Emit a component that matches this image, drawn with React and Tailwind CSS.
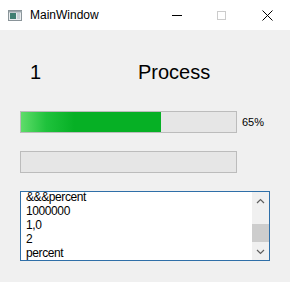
const lines = ["&&&percent", "1000000", "1,0", "2", "percent"];

function AppIcon() {
	return (
		<svg width="14" height="11" viewBox="0 0 14 11">
			<rect x="0.5" y="0.5" width="13" height="10" fill="#e8ecee" stroke="#8a9499" />
			<rect x="1" y="1" width="13" height="1.5" fill="#9aa6ab" />
			<rect x="2" y="3" width="6" height="6" fill="#3f7f72" />
			<rect x="9" y="3" width="3" height="6" fill="#c9d2d6" />
		</svg>
	);
}

function ProgressBar({ value }) {
	return (
		<div className="h-[22px] w-[217px] border border-[#bcbcbc] bg-[#e6e6e6]">
			{value > 0 ? (
				<div
					className="h-full bg-[linear-gradient(90deg,#5fdc6a_0%,#1fc23c_18%,#06b025_38%,#06b025_100%)]"
					style={{ width: `${value}%` }}
				/>
			) : null}
		</div>
	);
}

function ListBox() {
	return (
		<div className="flex h-[70px] w-[261px] border border-[#2f6fa8] bg-white">
			<div className="flex-1 overflow-hidden pl-[5px]">
				<div className="-mt-[2px] text-[12px] leading-[14px] tracking-[-0.4px] text-black">
					{lines.map((line) => (
						<div key={line}>{line}</div>
					))}
				</div>
			</div>
			<div className="flex w-[17px] flex-col bg-[#f0f0f0]">
				<div className="flex h-[17px] items-center justify-center">
					<svg width="9" height="6" viewBox="0 0 9 6">
						<path d="M1 5 L4.5 1.5 L8 5" fill="none" stroke="#606060" strokeWidth="1.2" />
					</svg>
				</div>
				<div className="flex-1" />
				<div className="h-[18px] bg-[#cdcdcd]" />
				<div className="h-[1px]" />
				<div className="flex h-[17px] items-center justify-center">
					<svg width="9" height="6" viewBox="0 0 9 6">
						<path d="M1 1 L4.5 4.5 L8 1" fill="none" stroke="#606060" strokeWidth="1.2" />
					</svg>
				</div>
			</div>
		</div>
	);
}

export default function App() {
	return (
		<div className="flex h-[282px] w-[290px] flex-col bg-[#f0f0f0] font-['Liberation_Sans',Arial,sans-serif]">
			<div className="flex h-[30px] items-center bg-white">
				<div className="ml-[8px] flex">
					<AppIcon />
				</div>
				<span className="ml-[8px] text-[12px] text-black">MainWindow</span>
				<div className="ml-auto flex h-full">
					<div className="flex h-full w-[46px] items-center justify-center pl-[4px]">
						<div className="h-px w-[10px] bg-black" />
					</div>
					<div className="flex h-full w-[46px] items-center justify-center">
						<div className="h-[9px] w-[9px] border border-[#cccccc]" />
					</div>
					<div className="flex h-full w-[46px] items-center justify-center">
						<svg width="11" height="11" viewBox="0 0 11 11">
							<path d="M0.5 0.5 L10.5 10.5 M10.5 0.5 L0.5 10.5" stroke="#000" strokeWidth="1" />
						</svg>
					</div>
				</div>
			</div>

			<div className="flex flex-col px-[20px] pt-[30px]">
				<div className="flex h-[24px] items-center text-[20px] leading-[24px] text-black">
					<span className="ml-[10px] w-[108px]">1</span>
					<span>Process</span>
				</div>

				<div className="mt-[27px] flex items-center">
					<ProgressBar value={65} />
					<span className="ml-[5px] text-[11px] text-black">65%</span>
				</div>

				<div className="mt-[18px] flex">
					<ProgressBar value={0} />
				</div>

				<div className="mt-[18px] flex">
					<ListBox />
				</div>
			</div>
		</div>
	);
}
